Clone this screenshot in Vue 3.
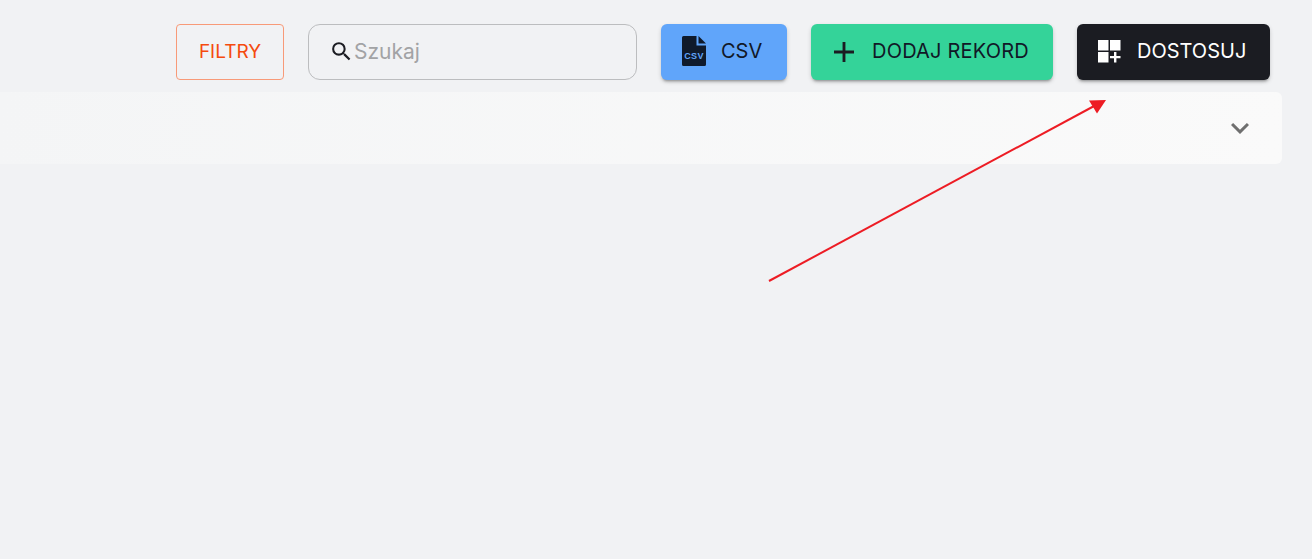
<template>
  <div class="page">
    <div class="toolbar">
      <button class="btn-filter"><span>FILTRY</span></button>
      <div class="search">
        <svg class="search-icon" viewBox="0 0 24 24" width="25" height="25">
          <path d="M15.5 14h-.79l-.28-.27A6.47 6.47 0 0 0 16 9.5 6.5 6.5 0 1 0 9.5 16c1.61 0 3.09-.59 4.23-1.57l.27.28v.79l5 4.99L20.49 19l-4.99-5zm-6 0C7.01 14 5 11.99 5 9.5S7.01 5 9.5 5 14 7.01 14 9.5 11.99 14 9.5 14z" fill="#1b1c22" />
        </svg>
        <span class="search-text">Szukaj</span>
      </div>
      <button class="btn btn-csv">
        <svg class="csv-icon" viewBox="0 0 24 30" width="24" height="30">
          <path d="M1.500 0H14.500V9.500H24V28.500A1.500 1.500 0 0 1 22.500 30H1.500A1.500 1.500 0 0 1 0 28.500V1.500A1.500 1.500 0 0 1 1.500 0z" fill="#0f1a2b" />
          <path d="M16.500 0L24 7.500H16.500z" fill="#0f1a2b" />
          <text x="12" y="23" text-anchor="middle" class="csv-label">CSV</text>
        </svg>
        <span>CSV</span>
      </button>
      <button class="btn btn-add">
        <svg viewBox="5 5 14 14" width="20" height="20">
          <path d="M19 13h-6v6h-2v-6H5v-2h6V5h2v6h6v2z" fill="#1b1c22" />
        </svg>
        <span>DODAJ REKORD</span>
      </button>
      <button class="btn btn-custom">
        <svg class="grid-icon" viewBox="0 0 24 24" width="24" height="24">
          <path d="M1 1h10.500v10.500H1zM13 1h10.500v10.500H13zM1 13h10.500v10.500H1zM17 13h2.400v3.900h4.100v2.400h-4.100v4.200H17v-4.200h-4v-2.400h4z" fill="#fff" />
        </svg>
        <span>DOSTOSUJ</span>
      </button>
    </div>
    <div class="panel">
      <svg class="chevron" viewBox="0 0 24 24" width="36" height="36">
        <path d="M7.410 8.590L12 13.170l4.590-4.580L18 10l-6 6-6-6z" fill="#6f6f6f" />
      </svg>
    </div>
    <svg class="arrow" width="1312" height="559" viewBox="0 0 1312 559">
      <line x1="769" y1="281" x2="1096" y2="105" stroke="#ed1c24" stroke-width="2" />
      <path d="M1106 100L1089 100.500L1097 113.500z" fill="#ed1c24" />
    </svg>
  </div>
</template>

<script setup>
</script>

<style>
html, body {
  margin: 0;
  background: #f1f2f4;
}
</style>

<style scoped>
.page {
  position: relative;
  width: 1312px;
  height: 559px;
  overflow: hidden;
  background: #f1f2f4;
  font-family: Inter, "Liberation Sans", sans-serif;
  box-sizing: border-box;
  padding-top: 24px;
}

.toolbar {
  display: flex;
  justify-content: flex-end;
  gap: 24px;
  padding-right: 42px;
  height: 56px;
}

button {
  font-family: inherit;
  border: none;
  cursor: pointer;
}

button span {
  margin-bottom: 2px;
}

.btn-filter {
  width: 108px;
  height: 56px;
  box-sizing: border-box;
  background: transparent;
  border: 1px solid #f89a78;
  border-radius: 4px;
  color: #f54a0e;
  font-size: 19px;
  display: flex;
  align-items: center;
  justify-content: center;
}

.search {
  width: 329px;
  height: 56px;
  box-sizing: border-box;
  border: 1px solid #bcbdbf;
  border-radius: 12px;
  display: flex;
  align-items: center;
  padding-left: 20px;
}

.search-icon {
  flex: none;
  margin-bottom: 2px;
}

.search-text {
  color: #a2a3a5;
  font-size: 21px;
  margin-bottom: 2px;
}

.btn {
  height: 56px;
  border-radius: 6px;
  display: flex;
  align-items: center;
  font-size: 20px;
  box-shadow: 0 3px 3px -2px rgba(0, 0, 0, 0.35), 0 2px 4px rgba(0, 0, 0, 0.16);
  box-sizing: border-box;
}

.btn svg {
  flex: none;
  overflow: visible;
}

.btn-csv {
  width: 126px;
  background: #60a5fa;
  color: #111827;
  padding-left: 21px;
  gap: 15px;
}

.csv-icon {
  margin-bottom: 2px;
}

.csv-label {
  font-family: "Liberation Sans Narrow", "Liberation Sans", sans-serif;
  font-size: 9px;
  font-weight: 700;
  letter-spacing: 0.4px;
  fill: #60a5fa;
}

.btn-add {
  width: 242px;
  background: #34d399;
  color: #111827;
  padding-left: 23px;
  gap: 18px;
}

.btn-add span {
  letter-spacing: 0.2px;
}

.btn-custom {
  width: 193px;
  background: #1b1c22;
  color: #fff;
  padding-left: 20px;
  gap: 16px;
}

.grid-icon {
  margin-bottom: 2px;
}

.panel {
  margin-top: 12px;
  width: 1282px;
  height: 72px;
  border-radius: 0 6px 6px 0;
  background: linear-gradient(100deg, #f4f5f6, #fafafa);
  display: flex;
  align-items: center;
  justify-content: flex-end;
  padding-right: 24px;
  box-sizing: border-box;
}

.arrow {
  position: absolute;
  left: 0;
  top: 0;
  pointer-events: none;
}
</style>
